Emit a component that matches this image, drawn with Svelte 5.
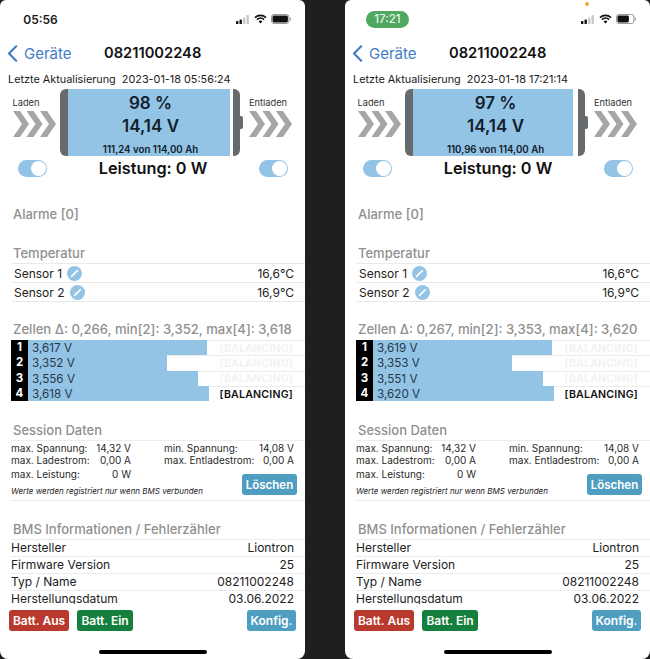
<script>
const phones = [
  {
    time: "05:56", pill: false, updated: "2023-01-18 05:56:24", pct: 98, ah: "111,24", batt: 17,
    zellen: "Zellen Δ: 0,266, min[2]: 3,352, max[4]: 3,618",
    cells: [["3,617 V", 179, false], ["3,352 V", 139, false], ["3,556 V", 170, false], ["3,618 V", 181, true]],
    temps: ["16,6°C", "16,9°C"]
  },
  {
    time: "17:21", pill: true, updated: "2023-01-18 17:21:14", pct: 97, ah: "110,96", batt: 13,
    zellen: "Zellen Δ: 0,267, min[2]: 3,353, max[4]: 3,620",
    cells: [["3,619 V", 179, false], ["3,353 V", 139, false], ["3,551 V", 170, false], ["3,620 V", 181, true]],
    temps: ["16,6°C", "16,9°C"]
  }
]

const info = [
  ["Hersteller", "Liontron"],
  ["Firmware Version", "25"],
  ["Typ / Name", "08211002248"],
  ["Herstellungsdatum", "03.06.2022"]
]
</script>

{#snippet chevrons()}
  <svg class="chev" width="43" height="26" viewBox="0 0 43 26">
    {#each [0, 13.5, 27] as x}
      <polygon points="{x},0 {x + 7},0 {x + 16},13 {x + 7},26 {x},26 {x + 9},13" fill="#a6a6a6" />
    {/each}
  </svg>
{/snippet}

{#snippet toggle()}
  <div class="toggle"><div class="knob"></div></div>
{/snippet}

<div class="page">
  {#each phones as p}
    <div class="phone">
      <div class="status">
        <span class="time" class:pill={p.pill}>{p.time}</span>
        <div class="status_icons">
          {#if p.pill}<span class="dot"></span>{/if}
          <svg width="14" height="9" viewBox="0 0 14 9">
            <rect x="0" y="6" width="2.4" height="3" rx=".6" fill="#111" />
            <rect x="3.5" y="4.4" width="2.4" height="4.6" rx=".6" fill="#111" />
            <rect x="7" y="2.4" width="2.4" height="6.6" rx=".6" fill="#c9c9c9" />
            <rect x="10.5" y="0" width="2.4" height="9" rx=".6" fill="#c9c9c9" />
          </svg>
          <svg width="13" height="10" viewBox="0 0 13 10">
            <path d="M1 3.6a8 8 0 0 1 11 0M2.9 5.6a5.2 5.2 0 0 1 7.2 0" fill="none" stroke="#111" stroke-width="1.6" />
            <path d="M6.5 9.6 4.6 7.5a2.8 2.8 0 0 1 3.8 0z" fill="#111" />
          </svg>
          <svg width="20" height="10" viewBox="0 0 20 10">
            <rect x=".5" y=".5" width="17.4" height="9" rx="2.4" fill="none" stroke="#999" />
            <rect x="1.5" y="1.5" width={p.batt - 1.6} height="7" rx="1.4" fill="#111" />
            <rect x="18.6" y="3.2" width="1.2" height="3.6" rx=".6" fill="#999" />
          </svg>
        </div>
      </div>

      <div class="nav">
        <svg class="back" width="11" height="17" viewBox="0 0 11 17">
          <path d="M9.2 1.2 2 8.5l7.2 7.3" fill="none" stroke="#3a78c4" stroke-width="2" stroke-linecap="round" stroke-linejoin="round" />
        </svg>
        <span class="back_txt">Geräte</span>
        <span class="nav_title">08211002248</span>
      </div>

      <div class="updated">Letzte Aktualisierung&nbsp; {p.updated}</div>

      <div class="batt_row">
        <div class="side left">
          <span class="side_lbl">Laden</span>
          {@render chevrons()}
        </div>
        <div class="battery">
          <div class="cap_l"></div>
          <div class="cell_area">
            <div class="fill" style="width:{p.pct}%"></div>
            <div class="batt_txt">
              <div class="big first">{p.pct} %</div>
              <div class="big">14,14 V</div>
              <div class="ah">{p.ah} von 114,00 Ah</div>
            </div>
          </div>
          <div class="cap_r"></div>
          <div class="nub"></div>
        </div>
        <div class="side right">
          <span class="side_lbl">Entladen</span>
          {@render chevrons()}
        </div>
      </div>

      <div class="power_row">
        {@render toggle()}
        <span class="power">Leistung: 0 W</span>
        {@render toggle()}
      </div>

      <h3 class="alarme">Alarme [0]</h3>

      <h3 class="temp_h">Temperatur</h3>
      <div class="temps">
        {#each p.temps as t, n}
          <div class="temp_row">
            <span>Sensor {n + 1}</span>
            <svg class="sensor" width="15" height="15" viewBox="0 0 15 15">
              <circle cx="7.5" cy="7.5" r="7.5" fill="#93c4e6" />
              <path d="M4.6 10.4 10.4 4.6" stroke="#fff" stroke-width="1.5" stroke-linecap="round" />
            </svg>
            <span class="val">{t}</span>
          </div>
        {/each}
      </div>

      <h3 class="zellen_h">{p.zellen}</h3>
      <div class="cells">
        {#each p.cells as c, n}
          <div class="cell_row">
            <span class="num">{n + 1}</span>
            <div class="bar_wrap">
              <div class="bar" style="width:{c[1]}px"></div>
              <span class="volt">{c[0]}</span>
              <span class="bal" class:on={c[2]}>[BALANCING]</span>
            </div>
          </div>
        {/each}
      </div>

      <h3 class="session_h">Session Daten</h3>
      <div class="session">
        <div class="kv"><span>max. Spannung:</span><span>14,32 V</span></div>
        <div class="kv"><span>min. Spannung:</span><span>14,08 V</span></div>
        <div class="kv"><span>max. Ladestrom:</span><span>0,00 A</span></div>
        <div class="kv"><span>max. Entladestrom:</span><span>0,00 A</span></div>
        <div class="kv"><span>max. Leistung:</span><span>0 W</span></div>
        <button class="btn blue loeschen">Löschen</button>
        <div class="note">Werte werden registriert nur wenn BMS verbunden</div>
      </div>

      <h3 class="bms_h">BMS Informationen / Fehlerzähler</h3>
      <div class="info">
        {#each info as row}
          <div class="info_row"><span>{row[0]}</span><span>{row[1]}</span></div>
        {/each}
      </div>

      <div class="actions">
        <button class="btn red">Batt. Aus</button>
        <button class="btn green">Batt. Ein</button>
        <button class="btn blue konfig">Konfig.</button>
      </div>

      <div class="home"></div>
    </div>
  {/each}
</div>

<style>
  :global(body) {
    background: #1f1f1f;
  }

  .page {
    display: flex;
    justify-content: space-between;
    width: 650px;
    height: 659px;
    background: #1f1f1f;
    font-family: Inter, "Liberation Sans", sans-serif;
    color: #1a1a1a;
    overflow: hidden;
  }

  .phone {
    position: relative;
    width: 305px;
    height: 659px;
    background: #fff;
    border-radius: 6px 6px 8px 8px;
    overflow: hidden;
  }

  .status {
    display: flex;
    justify-content: space-between;
    align-items: center;
    height: 38px;
    padding: 0 14px 0 21px;
  }

  .time {
    width: 43px;
    height: 17px;
    margin-left: -2px;
    line-height: 17px;
    text-align: center;
    font-size: 12px;
    font-weight: 600;
  }

  .time.pill {
    margin-left: 0;
    background: #4fa760;
    color: #e6f3e8;
    border-radius: 9px;
    font-weight: 500;
    font-size: 11.5px;
  }

  .status_icons {
    position: relative;
    display: flex;
    align-items: center;
    gap: 4px;
  }

  .dot {
    position: absolute;
    left: 4px;
    top: -12px;
    width: 4px;
    height: 4px;
    border-radius: 50%;
    background: #f0a63c;
  }

  .nav {
    position: relative;
    display: flex;
    align-items: center;
    height: 30px;
    padding-left: 7px;
  }

  .back_txt {
    margin-left: 6px;
    font-size: 15px;
    color: #3f7cc6;
  }

  .nav_title {
    position: absolute;
    left: 104px;
    font-size: 14.7px;
    font-weight: 600;
    color: #111;
  }

  .updated {
    margin-top: 3px;
    padding-left: 8px;
    height: 17px;
    line-height: 17px;
    font-size: 10.85px;
    white-space: nowrap;
  }

  .batt_row {
    display: flex;
    height: 67px;
    margin-top: 1px;
  }

  .side {
    display: flex;
    flex-direction: column;
    align-items: center;
    width: 60px;
    padding-top: 7px;
    flex: none;
  }

  .side_lbl {
    font-size: 9.3px;
    height: 14px;
    line-height: 14px;
    color: #333;
  }

  .chev {
    margin-top: 1px;
  }

  .left .side_lbl {
    margin-right: 8px;
  }

  .left .chev {
    margin-left: 9px;
  }

  .right .side_lbl {
    margin-right: 4px;
  }

  .battery {
    position: relative;
    display: flex;
    width: 180px;
    height: 67px;
    flex: none;
    border-radius: 6px;
  }

  .cap_l {
    width: 8px;
    background: #676a6c;
    border-radius: 6px 0 0 6px;
  }

  .cap_r {
    width: 7px;
    background: #676a6c;
    border-radius: 0 6px 6px 0;
  }

  .nub {
    position: absolute;
    right: -3px;
    top: 27px;
    width: 3px;
    height: 13px;
    background: #676a6c;
    border-radius: 0 2px 2px 0;
  }

  .cell_area {
    position: relative;
    flex: 1;
    background: #fff;
  }

  .fill {
    position: absolute;
    left: 0;
    top: 0;
    bottom: 0;
    background: #93c4e6;
  }

  .batt_txt {
    position: relative;
    text-align: center;
    color: #12202b;
  }

  .big {
    height: 23px;
    line-height: 23px;
    font-size: 17px;
    font-weight: 600;
  }

  .big.first {
    margin-top: 3px;
  }

  .ah {
    margin-top: 5px;
    font-size: 9.7px;
    font-weight: 600;
    line-height: 13px;
  }

  .power_row {
    display: flex;
    justify-content: space-between;
    align-items: center;
    height: 24px;
    padding: 0 17px 0 18px;
  }

  .power {
    font-size: 16.3px;
    font-weight: 600;
    color: #111;
  }

  .toggle {
    display: flex;
    justify-content: flex-end;
    align-items: center;
    width: 29px;
    height: 17px;
    padding: 1px;
    box-sizing: border-box;
    background: #93c4e6;
    border-radius: 9px;
  }

  .knob {
    width: 15px;
    height: 15px;
    background: #fff;
    border-radius: 50%;
  }

  h3 {
    margin: 0;
    padding-left: 13px;
    font-size: 13px;
    font-weight: 500;
    line-height: 16px;
    color: #8f8f8f;
    white-space: nowrap;
  }

  .alarme {
    margin-top: 26px;
  }

  .temp_h {
    margin-top: 23px;
  }

  .temps {
    margin: 2px 0 0 12px;
  }

  .temp_row {
    display: flex;
    align-items: center;
    height: 18px;
    padding: 0 11px 0 2px;
    border-top: 1px solid #e9e9e9;
    font-size: 12px;
    color: #222;
  }

  .temp_row:last-child {
    border-bottom: 1px solid #e9e9e9;
  }

  .sensor {
    margin-left: 5px;
  }

  .val {
    margin-left: auto;
  }

  .zellen_h {
    margin-top: 19px;
    font-size: 13.1px;
  }

  .cells {
    margin: 3px 0 0 11px;
  }

  .cell_row {
    display: flex;
    height: 15.3px;
  }

  .num {
    width: 17px;
    flex: none;
    background: #000;
    color: #fff;
    text-align: center;
    font-size: 11.5px;
    font-weight: 700;
    line-height: 15px;
  }

  .bar_wrap {
    position: relative;
    display: flex;
    flex: 1;
    align-items: center;
    justify-content: space-between;
    padding: 0 12px 0 4px;
    border-top: 1px solid #ececec;
  }

  .bar {
    position: absolute;
    left: 0;
    top: -1px;
    bottom: 0;
    background: #93c4e6;
  }

  .volt {
    position: relative;
    font-size: 11.7px;
    color: #27384a;
  }

  .bal {
    position: relative;
    font-size: 10.6px;
    font-weight: 600;
    letter-spacing: .2px;
    color: #f1f1f1;
  }

  .bal.on {
    color: #111;
  }

  .session_h {
    margin-top: 21px;
  }

  .session {
    display: grid;
    grid-template-columns: 120px 130px;
    grid-template-rows: 13px 12px 15px 19px;
    column-gap: 33px;
    margin: 2px 0 0 11px;
    border-top: 1px solid #ececec;
    border-bottom: 1px solid #ececec;
    align-items: center;
  }

  .kv {
    display: flex;
    justify-content: space-between;
    font-size: 10px;
    color: #2a2a2a;
    white-space: nowrap;
  }

  .note {
    grid-row: 4;
    grid-column: 1 / 3;
    font-size: 8px;
    font-style: italic;
    color: #222;
    white-space: nowrap;
  }

  .btn {
    border: none;
    margin: 0;
    padding: 0;
    height: 21px;
    border-radius: 3px;
    color: #fff;
    font-family: inherit;
    font-size: 12px;
    font-weight: 600;
    text-align: center;
  }

  .blue {
    background: #509dc2;
  }

  .red {
    width: 60px;
    background: #b8392e;
  }

  .green {
    width: 56px;
    background: #157f3d;
  }

  .loeschen {
    grid-row: 3 / 5;
    grid-column: 2;
    justify-self: end;
    align-self: end;
    width: 55px;
    margin-right: -3px;
    margin-bottom: 5px;
    font-size: 11.5px;
  }

  .bms_h {
    margin-top: 20px;
  }

  .info {
    height: 65px;
    margin: 2px 0 0 11px;
    overflow: hidden;
  }

  .info_row {
    display: flex;
    justify-content: space-between;
    height: 17px;
    line-height: 16px;
    padding-right: 11px;
    box-sizing: border-box;
    border-top: 1px solid #ececec;
    font-size: 12px;
    color: #222;
  }

  .actions {
    display: flex;
    gap: 8px;
    margin: 6px 0 0 9px;
  }

  .konfig {
    width: 49px;
    margin-left: auto;
    margin-right: 9px;
  }

  .home {
    position: absolute;
    left: 99px;
    bottom: 5px;
    width: 108px;
    height: 4px;
    background: #000;
    border-radius: 2px;
  }
</style>
